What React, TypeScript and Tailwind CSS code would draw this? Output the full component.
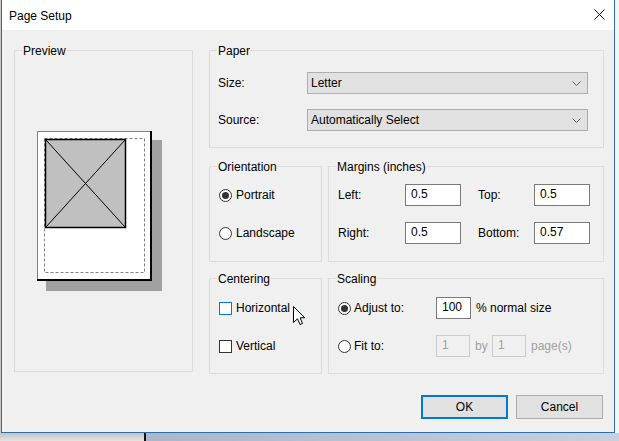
import React from "react";

function Group({
  label,
  className,
  children,
}: {
  label: string;
  className?: string;
  children?: React.ReactNode;
}) {
  return (
    <div className={"border border-[#dcdcdc] flex flex-col " + (className ?? "")}>
      <div className="-mt-[8px] ml-[7px] px-[1px] w-fit leading-[16px] bg-[#f0f0f0]">{label}</div>
      {children}
    </div>
  );
}

function Radio({ checked }: { checked?: boolean }) {
  return (
    <span className="w-[13px] h-[13px] shrink-0 rounded-full border border-[#333] bg-white flex items-center justify-center">
      {checked && <span className="w-[7px] h-[7px] rounded-full bg-[#333]" />}
    </span>
  );
}

function Check({ hover }: { hover?: boolean }) {
  return (
    <span
      className={
        "w-[13px] h-[13px] shrink-0 border bg-white " +
        (hover ? "border-[#0078d7]" : "border-[#333]")
      }
    />
  );
}

function Select({ value }: { value: string }) {
  return (
    <div className="w-[281px] h-[22px] border border-[#adadad] bg-[#e1e1e1] flex items-center pl-[3px] pr-[6px]">
      <span className="flex-1">{value}</span>
      <svg width="9" height="5" viewBox="0 0 9 5" fill="none">
        <path d="M0.5 0.5 L4.5 4.5 L8.5 0.5" stroke="#606060" strokeWidth="1" />
      </svg>
    </div>
  );
}

function Field({ value, w = "w-[56px]", disabled }: { value: string; w?: string; disabled?: boolean }) {
  return (
    <div
      className={
        w +
        " h-[22px] border flex items-center pl-[5px] pb-[2px] " +
        (disabled ? "border-[#cccccc] bg-[#f0f0f0] text-[#a0a0a0]" : "border-[#7a7a7a] bg-white")
      }
    >
      {value}
    </div>
  );
}

function PagePreview() {
  return (
    <svg width="125" height="160" viewBox="0 0 125 160" className="ml-[22px] mt-[72px]">
      <rect x="9" y="9" width="116" height="151" fill="#a0a0a0" />
      <rect x="0" y="0" width="115" height="150" fill="#ffffff" />
      <path d="M0.5 150 V0.5 H115" stroke="#808080" strokeWidth="1" fill="none" />
      <path d="M114 0 V149 H0" stroke="#000" strokeWidth="2" fill="none" />
      <rect x="7.5" y="7.5" width="100" height="134" fill="none" stroke="#808080" strokeDasharray="3 2" />
      <rect x="8.5" y="8.5" width="80" height="88" fill="#c0c0c0" stroke="#000" strokeWidth="1.5" />
      <path d="M8.5 8.5 L88.5 96.5 M88.5 8.5 L8.5 96.5" stroke="#000" strokeWidth="1" />
    </svg>
  );
}

export default function App() {
  return (
    <div
      className="w-[619px] h-[441px] overflow-hidden bg-[#f6f6f6] text-[12px] leading-[16px] text-black flex flex-col"
      style={{ fontFamily: '"Liberation Sans", Arial, sans-serif' }}
    >
      <div className="flex">
        <div className="w-px h-[433px] bg-[#c8c8c8]" />
        <div className="w-[614px] h-[433px] border-l border-r border-b border-[#2e6da4] bg-[#f0f0f0] flex flex-col">
          {/* title bar */}
          <div className="h-[30px] bg-white flex items-center pl-[7px] pr-[8px]">
            <span className="flex-1 pt-[1px]">Page Setup</span>
            <svg width="11" height="11" viewBox="0 0 11 11" className="mr-[1px] -mt-[2px]">
              <path d="M0.5 0.5 L10.5 10.5 M10.5 0.5 L0.5 10.5" stroke="#111" strokeWidth="1" />
            </svg>
          </div>

          {/* body */}
          <div className="relative flex-1 flex flex-col pt-[20px]">
            <div className="flex">
              <Group label="Preview" className="ml-[12px] w-[179px] h-[322px]">
                <PagePreview />
              </Group>

              <div className="ml-[16px] w-[395px] flex flex-col">
                <Group label="Paper" className="h-[98px]">
                  <div className="mt-[13px] flex items-center pl-[8px]">
                    <span className="w-[89px]">Size:</span>
                    <Select value="Letter" />
                  </div>
                  <div className="mt-[15px] flex items-center pl-[8px]">
                    <span className="w-[89px]">Source:</span>
                    <Select value="Automatically Select" />
                  </div>
                </Group>

                <div className="mt-[18px] flex gap-[6px]">
                  <Group label="Orientation" className="w-[113px] h-[96px]">
                    <div className="mt-[9px] h-[22px] flex items-center gap-[4px] pl-[9px]">
                      <Radio checked />
                      <span>Portrait</span>
                    </div>
                    <div className="mt-[16px] h-[22px] flex items-center gap-[4px] pl-[9px]">
                      <Radio />
                      <span>Landscape</span>
                    </div>
                  </Group>
                  <Group label="Margins (inches)" className="w-[276px] h-[96px]">
                    <div className="mt-[9px] flex items-center pl-[9px]">
                      <span className="w-[67px]">Left:</span>
                      <Field value="0.5" />
                      <span className="ml-[17px] w-[56px]">Top:</span>
                      <Field value="0.5" />
                    </div>
                    <div className="mt-[16px] flex items-center pl-[9px]">
                      <span className="w-[67px]">Right:</span>
                      <Field value="0.5" />
                      <span className="ml-[17px] w-[56px]">Bottom:</span>
                      <Field value="0.57" />
                    </div>
                  </Group>
                </div>

                <div className="mt-[16px] flex gap-[6px]">
                  <Group label="Centering" className="w-[113px] h-[96px]">
                    <div className="mt-[10px] h-[22px] flex items-center gap-[4px] pl-[9px]">
                      <Check hover />
                      <span>Horizontal</span>
                    </div>
                    <div className="mt-[16px] h-[22px] flex items-center gap-[4px] pl-[9px]">
                      <Check />
                      <span>Vertical</span>
                    </div>
                  </Group>
                  <Group label="Scaling" className="w-[276px] h-[96px]">
                    <div className="mt-[10px] flex items-center pl-[9px]">
                      <div className="w-[98px] flex items-center gap-[3px]">
                        <Radio checked />
                        <span>Adjust to:</span>
                      </div>
                      <Field value="100" w="w-[35px]" />
                      <span className="ml-[5px]">% normal size</span>
                    </div>
                    <div className="mt-[16px] flex items-center pl-[9px]">
                      <div className="w-[98px] flex items-center gap-[3px]">
                        <Radio />
                        <span>Fit to:</span>
                      </div>
                      <Field value="1" w="w-[34px]" disabled />
                      <span className="ml-[5px] w-[17px] text-[#a0a0a0]">by</span>
                      <Field value="1" w="w-[34px]" disabled />
                      <span className="ml-[5px] text-[#a0a0a0]">page(s)</span>
                    </div>
                  </Group>
                </div>
              </div>
            </div>

            <div className="mt-[21px] flex justify-end gap-[8px] pr-[11px]">
              <button className="w-[87px] h-[24px] border-2 border-[#0078d7] bg-[#e1e1e1]">OK</button>
              <button className="w-[87px] h-[24px] border border-[#adadad] bg-[#e1e1e1]">Cancel</button>
            </div>

            {/* mouse pointer */}
            <svg
              width="13"
              height="20"
              viewBox="0 0 13 20"
              className="absolute left-[291px] top-[276px]"
            >
              <path
                d="M0.5 0.5 L0.5 16.5 L4.5 12.8 L7 18.5 L9.5 17.5 L7.2 11.8 L11.8 11.8 Z"
                fill="#fff"
                stroke="#000"
                strokeWidth="1"
                strokeLinejoin="round"
              />
            </svg>
          </div>
        </div>
      </div>
      <div className="flex-1 flex">
        <div className="w-[144px] bg-gradient-to-b from-[#c4c4c4] to-[#e4e4e4]" />
        <div className="w-[2px] bg-[#111]" />
        <div className="flex-1 bg-gradient-to-r from-[#a9b6cc] to-[#c6d0e0]" />
      </div>
    </div>
  );
}
